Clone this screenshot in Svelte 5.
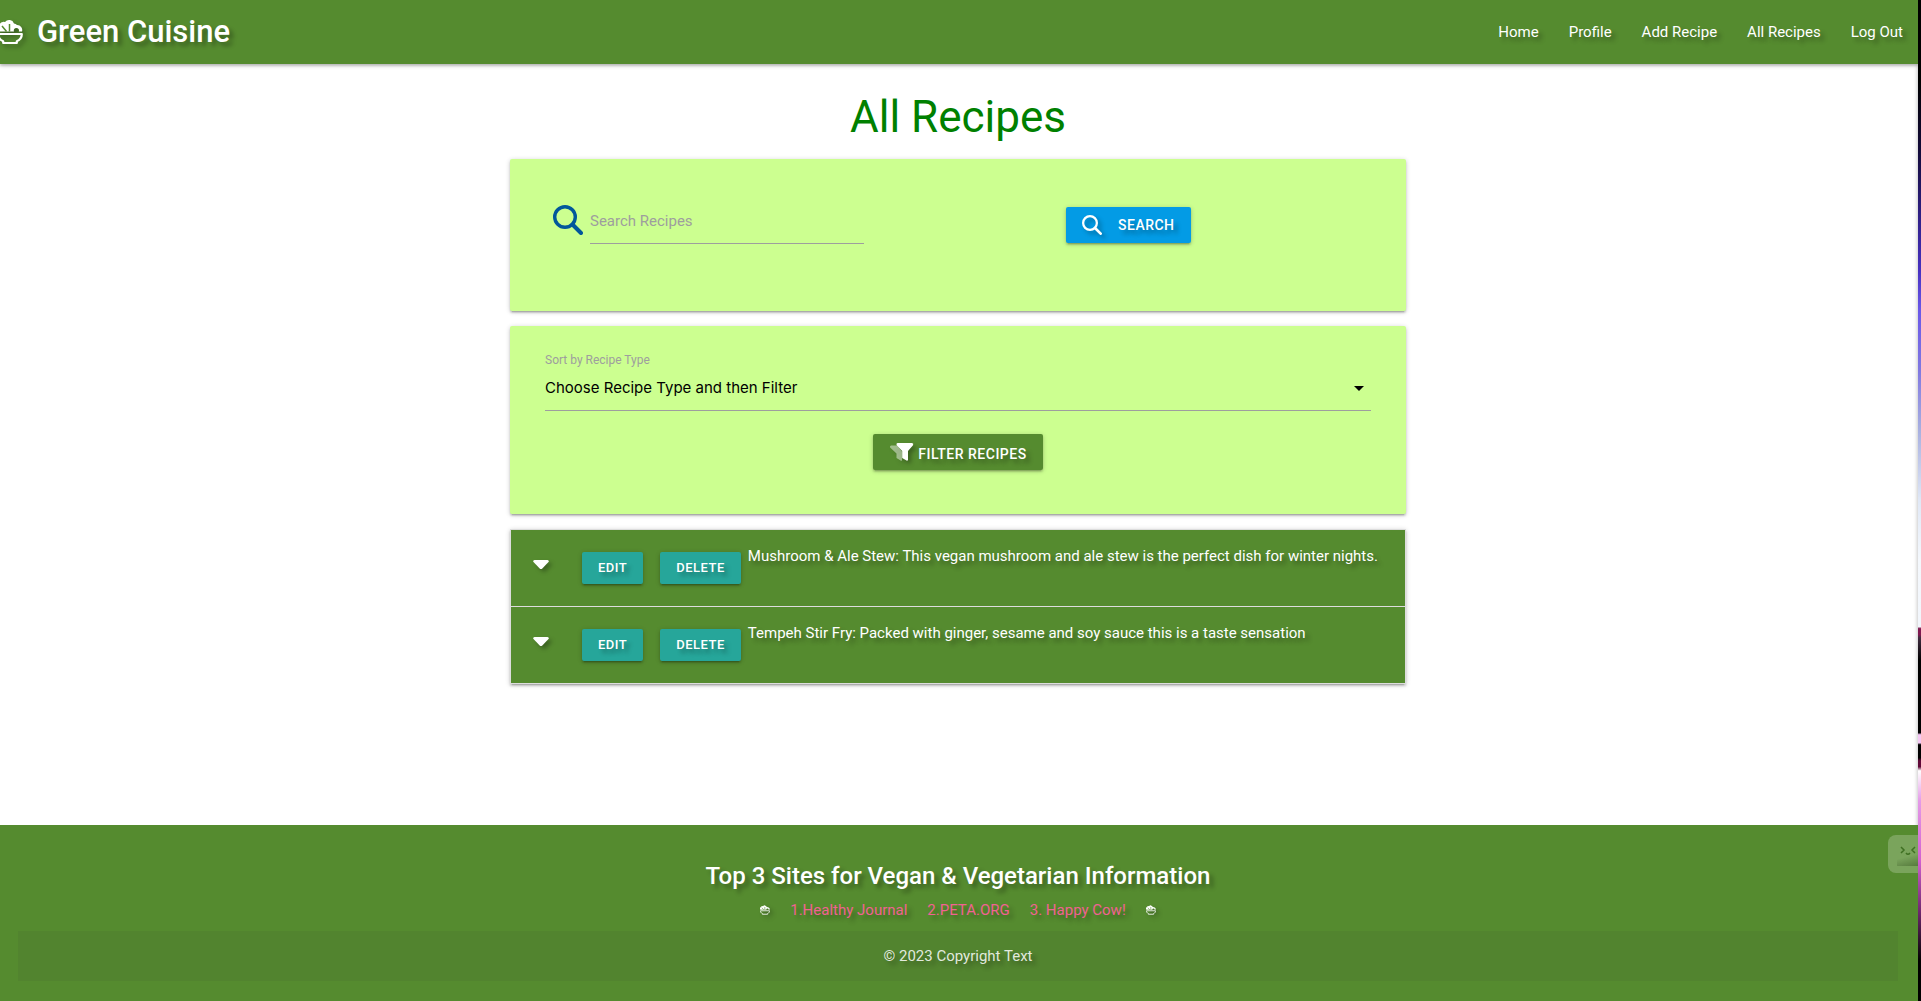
<script>
  const navLinks = ['Home', 'Profile', 'Add Recipe', 'All Recipes', 'Log Out'];
  const sites = ['1.Healthy Journal', '2.PETA.ORG', '3. Happy Cow!'];
  const recipes = [
    'Mushroom & Ale Stew: This vegan mushroom and ale stew is the perfect dish for winter nights.',
    'Tempeh Stir Fry: Packed with ginger, sesame and soy sauce this is a taste sensation'
  ];
</script>

{#snippet bowl()}
  <svg class="bowl" viewBox="0 0 26 26" aria-hidden="true">
    <path d="M1 12.5a5 5 0 0 1 1.2-7A5.500 5.500 0 0 1 8 3a5.200 5.200 0 0 1 9 1.400 4.500 4.500 0 0 1 3 1.600 5 5 0 0 1 5 6.500h-3.200a2.600 2.600 0 1 0-4.800 0z" fill="currentColor" />
    <path d="M5 7l4.500 5.500M12.500 5v7.500" stroke="#558b2f" stroke-width="1.500" fill="none" />
    <path d="M1.200 15h23.600c0 3.500-2 6-5 7.200V24H6.200v-1.800c-3-1.200-5-3.700-5-7.200z" fill="none" stroke="currentColor" stroke-width="2.200" stroke-linejoin="round" />
  </svg>
{/snippet}

{#snippet magnifier()}
  <svg class="magnifier" viewBox="0 0 30 30" aria-hidden="true">
    <circle cx="12" cy="12" r="10.300" fill="none" stroke="currentColor" stroke-width="3.400" />
    <path d="M19.500 19.500l8.500 8.500" stroke="currentColor" stroke-width="4" stroke-linecap="round" />
  </svg>
{/snippet}

<div class="window">
  <div class="page">
    <nav class="glow">
      <a class="brand" href="#home">{@render bowl()}<span>Green Cuisine</span></a>
      <ul>
        {#each navLinks as link}
          <li><a href="#{link}">{link}</a></li>
        {/each}
      </ul>
    </nav>

    <main>
      <h1>All Recipes</h1>

      <form class="card search" onsubmit={(e) => e.preventDefault()}>
        <label class="query">
          {@render magnifier()}
          <input type="text" placeholder="Search Recipes" aria-label="Search Recipes" />
        </label>
        <div class="go">
          <button class="btn blue glow">{@render magnifier()}<span>Search</span></button>
        </div>
      </form>

      <form class="card filter" onsubmit={(e) => e.preventDefault()}>
        <label for="type">Sort by Recipe Type</label>
        <div class="select">
          <select id="type"><option>Choose Recipe Type and then Filter</option></select>
          <svg viewBox="0 0 10 5" aria-hidden="true"><path d="M0 0h10L5 5z" /></svg>
        </div>
        <button class="btn green glow">
          <svg class="funnel" viewBox="0 0 24 18" aria-hidden="true">
            <path d="M1.500 2.500h6l5 6v9q-.5.500-1 .2L7 15v-4.500L.6 4.500Q0 3 1.500 2.500z" fill="#fff" opacity=".45" />
            <path d="M8 0h14.500q2 .5 1 2.300L18.500 8v9q-.5 1-1.500.6L12.700 15V8L7.200 2.300Q6.300.600 8 0z" fill="#fff" />
          </svg>
          <span>Filter Recipes</span>
        </button>
      </form>

      <ul class="recipes glow">
        {#each recipes as recipe}
          <li>
            <button class="toggle" aria-label="Show recipe">
              <svg viewBox="0 0 16 10" aria-hidden="true"><path d="M1.500 0h13q2 .6 1 2L9.300 8.500Q8 9.600 6.700 8.500L.5 2Q-.5.6 1.500 0z" fill="#fff" /></svg>
            </button>
            <button class="btn small">Edit</button>
            <button class="btn small">Delete</button>
            <p>{recipe}</p>
          </li>
        {/each}
      </ul>
    </main>

    <footer class="glow">
      <h2>Top 3 Sites for Vegan &amp; Vegetarian Information</h2>
      <div class="sites">
        {@render bowl()}
        {#each sites as site}<a href="#{site}">{site}</a>{/each}
        {@render bowl()}
      </div>
      <div class="copyright">© 2023 Copyright Text</div>
    </footer>
    <div class="widget" aria-hidden="true">
      <svg viewBox="0 0 18 10"><path d="M2 1l3 3-3 3M16 1l-3 3 3 3M7 7q2 2.500 4 0" fill="none" stroke="#3f6f22" stroke-width="1.500" /></svg>
    </div>
  </div>
  <div class="edge"></div>
</div>

<style>
  :global(body) {
    margin: 0;
    background: #fff;
    font-family: Roboto, 'Liberation Sans', sans-serif;
    font-size: 15px;
    line-height: 22px;
  }
  .window { display: flex; min-height: 100vh; }
  .page { position: relative; flex: 1; min-width: 0; display: flex; flex-direction: column; overflow: hidden; }
  .edge {
    width: 3px;
    box-shadow: 0 0 4px rgba(0, 0, 0, 0.35);
    background: linear-gradient(#000 0, #000 8%, #120a38 15%, #30208a 22%, #4630c0 27%, #6a58e8 31%, #8078e0 37%, #a8b0e0 43%, #e0e8f6 50%, #f4f8fd 56%, #f2f6fc 62.6%, #801850 62.8%, #801850 63.4%, #402c40 63.7%, #000 66%, #000 73.200%, #f4c8f4 73.400%, #f4c8f4 74.200%, #000 74.400%, #000 75.700%, #600838 76%, #600838 76.600%, #fff 77%, #e49be8 80%, #d060d0 86%, #702870 91%, #000 96%);
  }
  .glow { text-shadow: 4px 4px 4px rgba(0, 0, 0, 0.3); }
  .glow svg { filter: drop-shadow(3px 3px 2px rgba(0, 0, 0, 0.3)); }
  ul { list-style: none; margin: 0; padding: 0; }
  a { color: inherit; text-decoration: none; }
  svg { display: block; flex: none; }
  nav {
    display: flex;
    align-items: center;
    justify-content: space-between;
    height: 64px;
    background: #558b2f;
    color: #fff;
    box-shadow: 0 2px 2px rgba(0, 0, 0, 0.14), 0 1px 5px rgba(0, 0, 0, 0.24);
  }
  .brand { display: flex; align-items: center; gap: 14px; margin-left: -3px; font-size: 31px; line-height: 64px; font-weight: 500; }
  .brand .bowl { width: 26px; height: 26px; }
  nav ul { display: flex; }
  nav li a { display: block; padding: 0 15px; line-height: 64px; }
  main { width: 896px; max-width: 100%; margin: 0 auto; padding-right: 2px; }
  h1 { margin: 28px 0 17px; font-size: 44px; line-height: 50px; font-weight: 400; color: #008000; text-align: center; }
  .card {
    background: #ccff90;
    border-radius: 2px;
    margin-bottom: 15px;
    box-sizing: border-box;
    box-shadow: 0 2px 2px rgba(0, 0, 0, 0.14), 0 3px 1px -2px rgba(0, 0, 0, 0.12), 0 1px 5px rgba(0, 0, 0, 0.2);
  }
  .search { display: grid; grid-template-columns: 1fr 1fr; height: 152px; padding: 40px 36px; }
  .query { display: flex; gap: 7px; color: #01579b; padding-left: 7px; }
  .query .magnifier { width: 30px; height: 30px; margin-top: 6px; }
  .query input {
    width: 274px;
    height: 45px;
    box-sizing: border-box;
    padding: 0;
    border: 0;
    border-bottom: 1px solid #9e9e9e;
    background: none;
    font: inherit;
    color: #000;
    outline: 0;
  }
  .query input::placeholder { color: #9e9e9e; opacity: 1; }
  .go { padding: 8px 0 0 108px; }
  .btn {
    display: inline-flex;
    align-items: center;
    height: 36px;
    padding: 0 16px;
    border: 0;
    border-radius: 2px;
    font: 500 14px/36px Roboto, 'Liberation Sans', sans-serif;
    letter-spacing: 0.5px;
    text-transform: uppercase;
    color: #fff;
    box-shadow: 0 2px 2px rgba(0, 0, 0, 0.14), 0 3px 1px -2px rgba(0, 0, 0, 0.12), 0 1px 5px rgba(0, 0, 0, 0.2);
  }
  .blue { background: #039be5; gap: 16px; }
  .blue .magnifier { width: 20px; height: 20px; }
  .green { background: #558b2f; gap: 4px; }
  .green span { padding-top: 3px; }
  .funnel { width: 25px; height: 18px; }
  .filter { display: flex; flex-direction: column; align-items: center; height: 188px; padding: 24px 35px; }
  .filter label { align-self: flex-start; font-size: 12px; line-height: 20px; color: #9e9e9e; }
  .select { display: flex; align-items: center; width: 100%; height: 41px; box-sizing: border-box; border-bottom: 1px solid #9e9e9e; margin-bottom: 23px; padding: 0 7px 4px 0; }
  .select select { flex: 1; height: 36px; border: 0; padding: 0 0 2px; appearance: none; background: none; font: 15px Inter, Roboto, sans-serif; color: #000; outline: 0; }
  .select svg { width: 10px; height: 5px; }
  .recipes {
    border: 1px solid #ddd;
    border-bottom: 0;
    box-shadow: 0 2px 2px rgba(0, 0, 0, 0.14), 0 3px 1px -2px rgba(0, 0, 0, 0.12), 0 1px 5px rgba(0, 0, 0, 0.2);
  }
  .recipes li {
    display: flex;
    height: 76px;
    padding-left: 15px;
    background: #558b2f;
    border-bottom: 1px solid #ddd;
    color: #fff;
  }
  .toggle { width: 30px; height: 20px; margin: 25px 26px 0 0; border: 0; padding: 5px 7px; background: none; }
  .toggle svg { width: 16px; height: 10px; }
  .small { height: 32px; margin: 22px 17px 0 0; background: #26a69a; font-size: 13px; line-height: 32px; text-shadow: inherit; }
  .small + .small { margin-right: 7px; }
  .recipes p { margin: 15px 0 0; }
  footer { margin-top: auto; box-sizing: border-box; height: 176px; padding: 34px 20px 0 18px; background: #558b2f; color: #fff; text-align: center; }
  h2 { margin: 0; font-size: 24px; line-height: 34px; font-weight: 500; }
  .sites { display: flex; align-items: center; justify-content: center; gap: 20px; padding: 6px 0 10px; color: #f06292; }
  .sites .bowl { width: 10px; height: 10px; color: #fff; }
  .copyright { height: 50px; line-height: 50px; background: rgba(51, 51, 51, 0.08); color: rgba(255, 255, 255, 0.85); }
  .widget {
    position: absolute;
    right: 0;
    bottom: 128px;
    width: 30px;
    height: 38px;
    box-sizing: border-box;
    padding: 11px 0 0 11px;
    border-radius: 8px 0 0 8px;
    background: linear-gradient(165deg, transparent 55%, rgba(50, 80, 30, 0.5)) 9px 9px / 21px 22px no-repeat, rgba(255, 255, 255, 0.22);
  }
  .widget svg { width: 18px; height: 10px; }
</style>
